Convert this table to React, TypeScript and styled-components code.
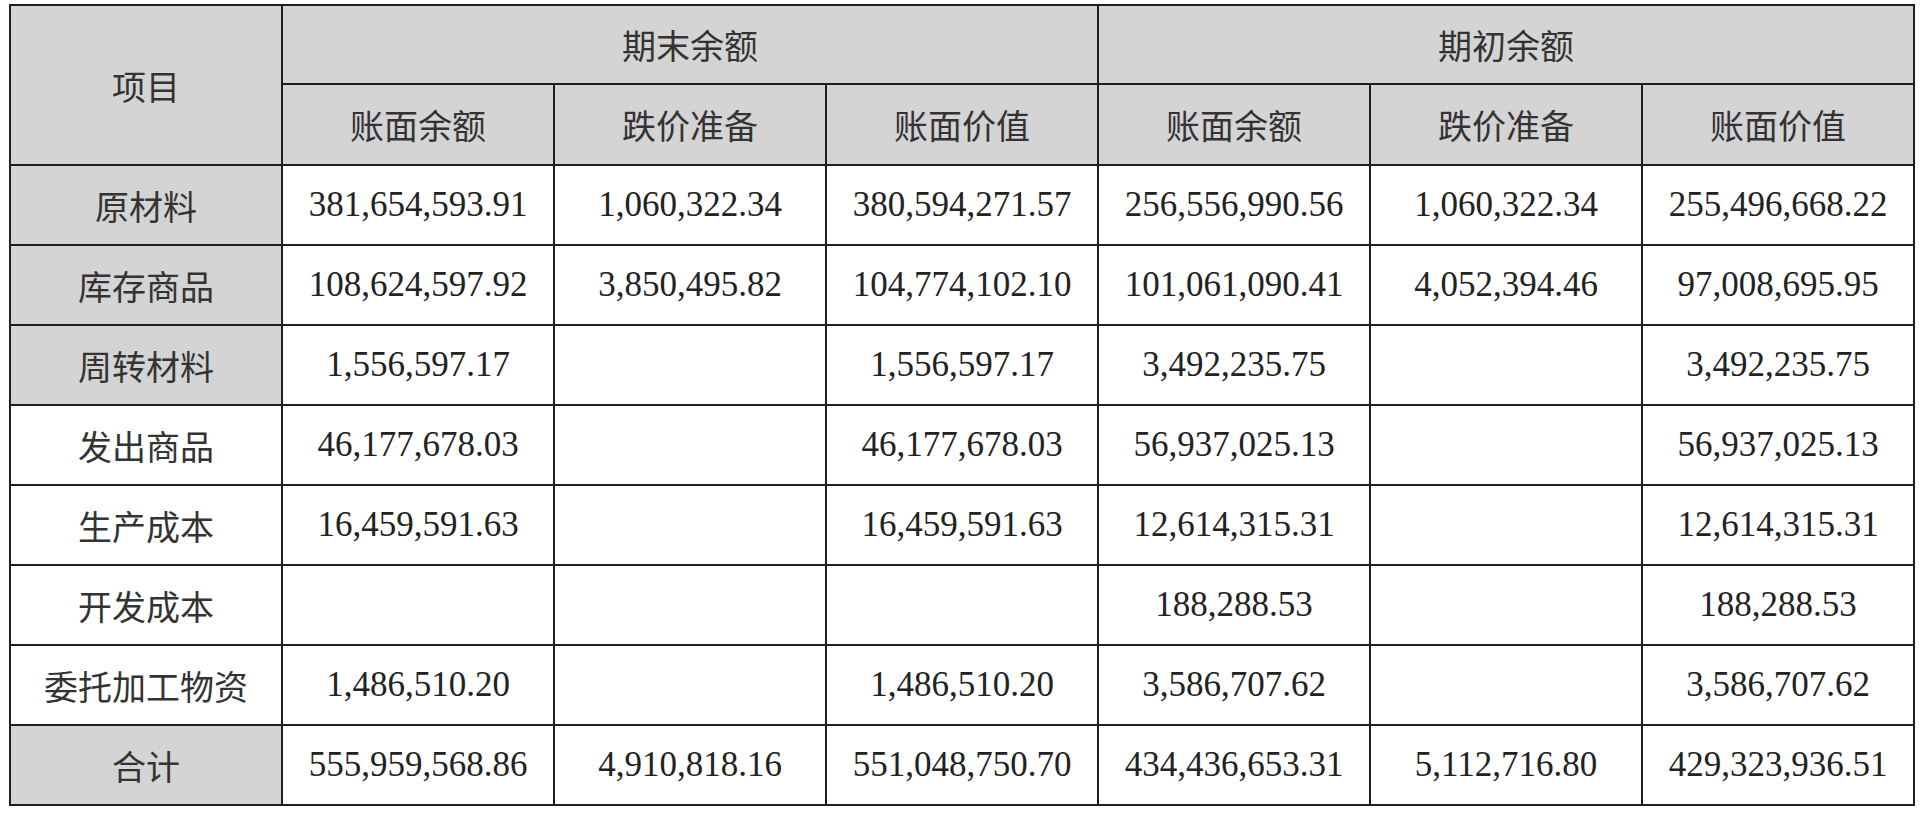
import React from 'react';
import styled, { createGlobalStyle } from 'styled-components';

const GlobalStyle = createGlobalStyle`
  html, body {
    margin: 0;
    padding: 0;
    background: #ffffff;
  }
`;

type Row = {
  name: string;
  shaded: boolean;
  values: string[];
};

const rows: Row[] = [
  {
    name: '原材料',
    shaded: true,
    values: ['381,654,593.91', '1,060,322.34', '380,594,271.57', '256,556,990.56', '1,060,322.34', '255,496,668.22'],
  },
  {
    name: '库存商品',
    shaded: true,
    values: ['108,624,597.92', '3,850,495.82', '104,774,102.10', '101,061,090.41', '4,052,394.46', '97,008,695.95'],
  },
  {
    name: '周转材料',
    shaded: true,
    values: ['1,556,597.17', '', '1,556,597.17', '3,492,235.75', '', '3,492,235.75'],
  },
  {
    name: '发出商品',
    shaded: false,
    values: ['46,177,678.03', '', '46,177,678.03', '56,937,025.13', '', '56,937,025.13'],
  },
  {
    name: '生产成本',
    shaded: false,
    values: ['16,459,591.63', '', '16,459,591.63', '12,614,315.31', '', '12,614,315.31'],
  },
  {
    name: '开发成本',
    shaded: false,
    values: ['', '', '', '188,288.53', '', '188,288.53'],
  },
  {
    name: '委托加工物资',
    shaded: false,
    values: ['1,486,510.20', '', '1,486,510.20', '3,586,707.62', '', '3,586,707.62'],
  },
  {
    name: '合计',
    shaded: true,
    values: ['555,959,568.86', '4,910,818.16', '551,048,750.70', '434,436,653.31', '5,112,716.80', '429,323,936.51'],
  },
];

const subHeads = ['账面余额', '跌价准备', '账面价值'];

export default function App() {
  return (
    <>
      <GlobalStyle />
      <Page>
        <Table>
          <colgroup>
            {Array.from({ length: 7 }).map((_, i) => (
              <col key={i} style={{ width: 272 }} />
            ))}
          </colgroup>
          <thead>
            <HeadRow height={79}>
              <HeadCell rowSpan={2}>项目</HeadCell>
              <HeadCell colSpan={3}>期末余额</HeadCell>
              <HeadCell colSpan={3}>期初余额</HeadCell>
            </HeadRow>
            <HeadRow height={81}>
              {[...subHeads, ...subHeads].map((h, i) => (
                <HeadCell key={i}>{h}</HeadCell>
              ))}
            </HeadRow>
          </thead>
          <tbody>
            {rows.map((r) => (
              <BodyRow key={r.name}>
                <NameCell shaded={r.shaded}>{r.name}</NameCell>
                {r.values.map((v, i) => (
                  <NumCell key={i}>{v}</NumCell>
                ))}
              </BodyRow>
            ))}
          </tbody>
        </Table>
      </Page>
    </>
  );
}

const Page = styled.div`
  padding: 4px 0 0 9px;
`;

const Table = styled.table`
  border-collapse: collapse;
  table-layout: fixed;
  width: 1906px;
  color: #222222;
`;

const HeadRow = styled.tr<{ height: number }>`
  height: ${(p) => p.height}px;
`;

const BodyRow = styled.tr`
  height: 80px;
`;

const cellBase = `
  border: 2px solid #1e1e1e;
  padding: 0;
  text-align: center;
  vertical-align: middle;
  white-space: nowrap;
`;

const HeadCell = styled.th`
  ${cellBase}
  background: #d4d4d4;
  font-family: 'Noto Sans CJK SC', sans-serif;
  font-size: 34px;
  font-weight: 400;
  color: #333333;
`;

const NameCell = styled.td<{ shaded: boolean }>`
  ${cellBase}
  background: ${(p) => (p.shaded ? '#d4d4d4' : '#ffffff')};
  font-family: 'Noto Sans CJK SC', sans-serif;
  font-size: 34px;
  color: #333333;
`;

const NumCell = styled.td`
  ${cellBase}
  background: #ffffff;
  font-family: 'Liberation Serif', serif;
  font-size: 35px;
`;
